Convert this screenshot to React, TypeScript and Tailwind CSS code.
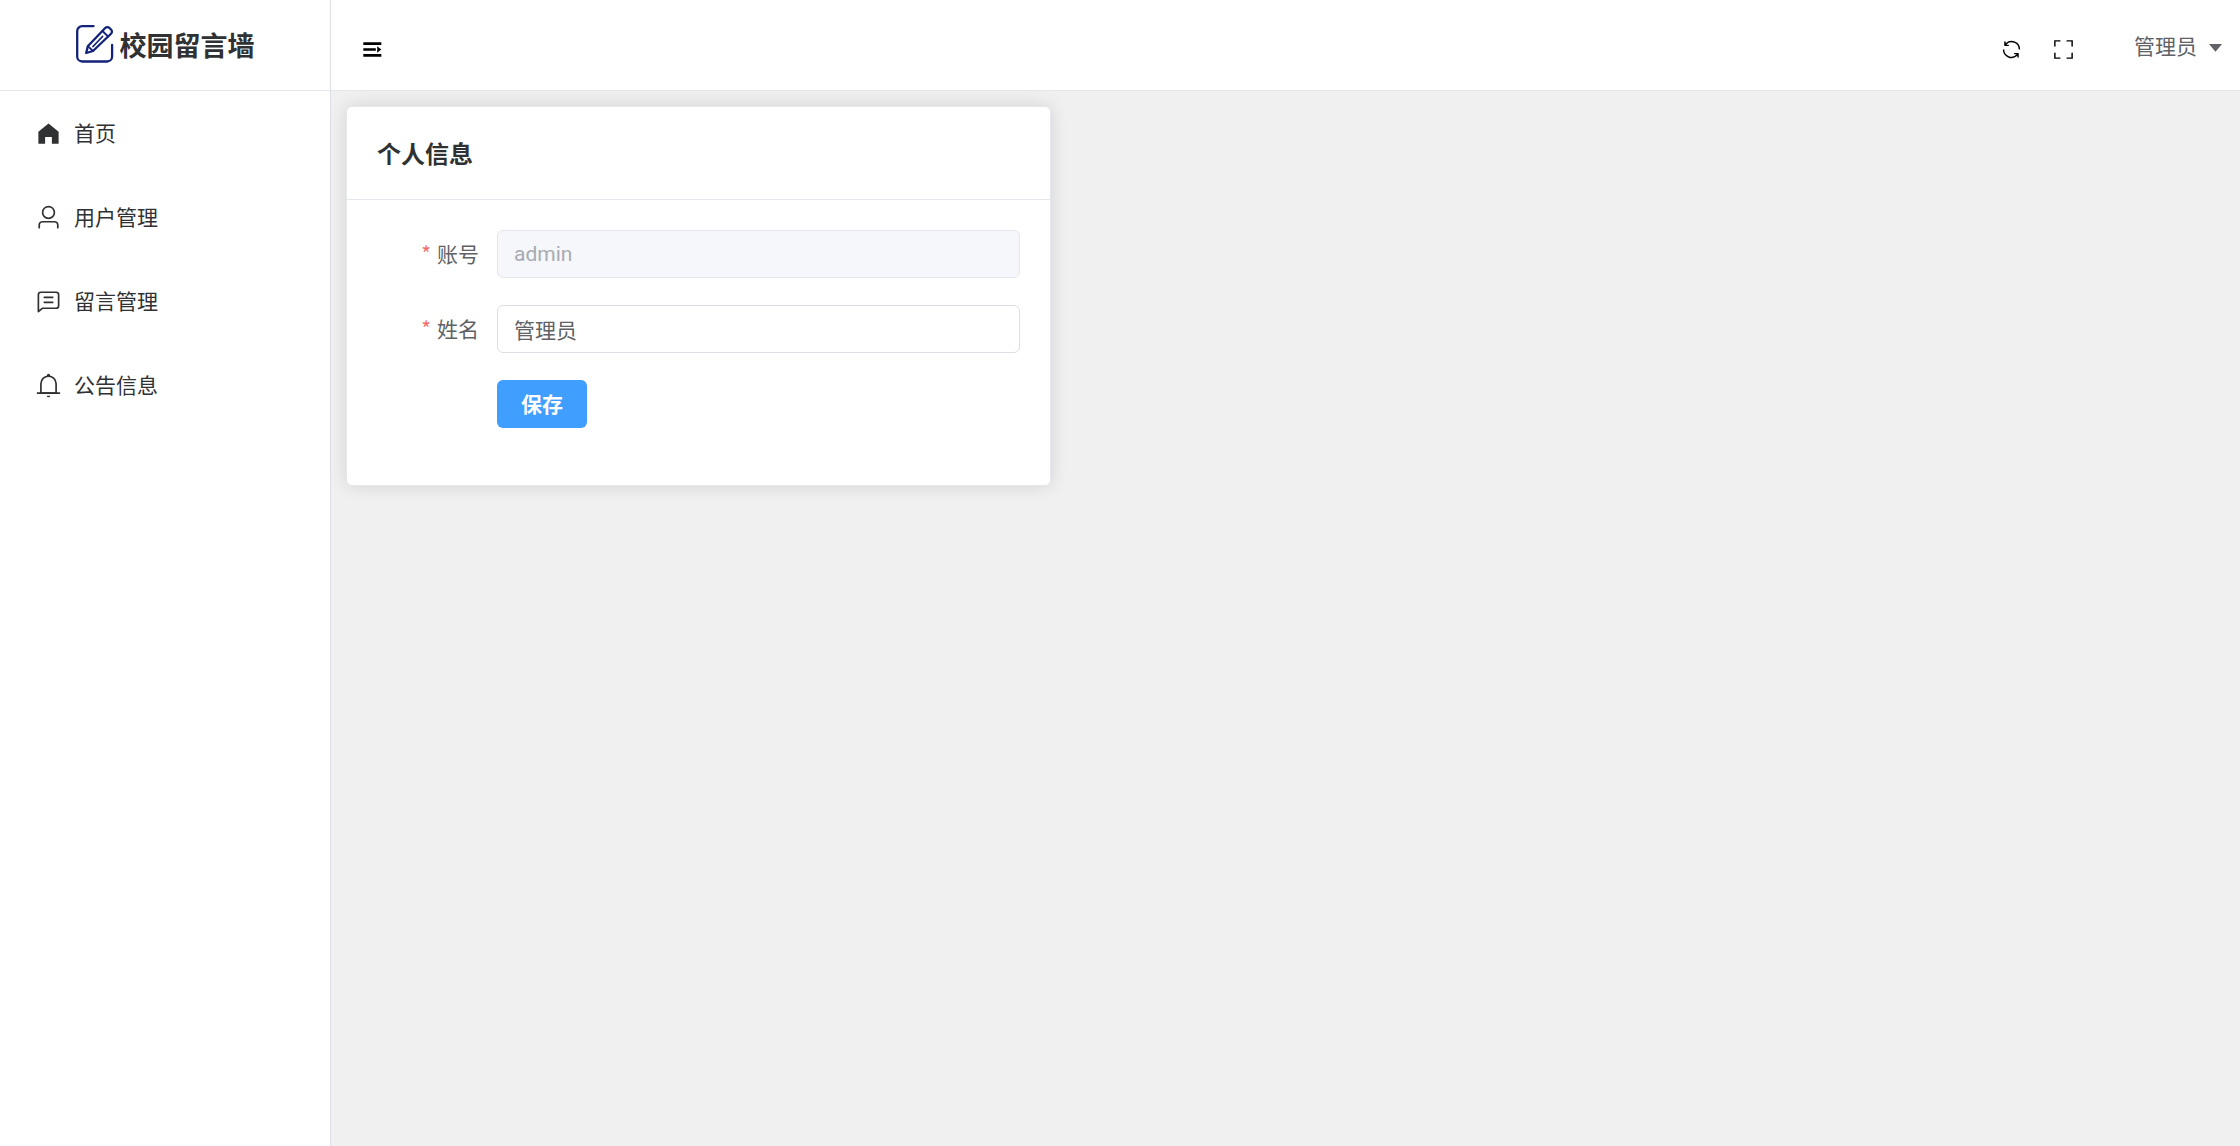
import React, { useState } from 'react';

type IconProps = {
  paths: string[];
  className?: string;
};

const icons = {
  home: ['M512 128 128 447.936V896h255.936V640H640v256h255.936V447.936z'],
  user: [
    'M512 512a192 192 0 1 0 0-384 192 192 0 0 0 0 384m0 64a256 256 0 1 1 0-512 256 256 0 0 1 0 512m320 320v-96a96 96 0 0 0-96-96H288a96 96 0 0 0-96 96v96a32 32 0 1 1-64 0v-96a160 160 0 0 1 160-160h448a160 160 0 0 1 160 160v96a32 32 0 1 1-64 0',
  ],
  chat: [
    'M160 826.88 273.536 736H800a64 64 0 0 0 64-64V256a64 64 0 0 0-64-64H224a64 64 0 0 0-64 64zM296 800 147.968 918.4A32 32 0 0 1 96 893.44V256a128 128 0 0 1 128-128h576a128 128 0 0 1 128 128v416a128 128 0 0 1-128 128z',
    'M352 512h320q32 0 32 32t-32 32H352q-32 0-32-32t32-32m0-192h320q32 0 32 32t-32 32H352q-32 0-32-32t32-32',
  ],
  bell: [
    'M512 64a64 64 0 0 1 64 64v64H448v-64a64 64 0 0 1 64-64',
    'M256 768h512V448a256 256 0 1 0-512 0zm256-640a320 320 0 0 1 320 320v384H192V448a320 320 0 0 1 320-320',
    'M96 768h832q32 0 32 32t-32 32H96q-32 0-32-32t32-32m352 128h128a64 64 0 0 1-128 0',
  ],
  refresh: [
    'M771.776 794.88A384 384 0 0 1 128 512h64a320 320 0 0 0 555.712 216.448H654.72a32 32 0 1 1 0-64h149.056a32 32 0 0 1 32 32v148.928a32 32 0 1 1-64 0v-50.56zM276.288 295.616h92.992a32 32 0 0 1 0 64H220.16a32 32 0 0 1-32-32V178.56a32 32 0 0 1 64 0v50.56A384 384 0 0 1 896.128 512h-64a320 320 0 0 0-555.776-216.384z',
  ],
  fullScreen: [
    'm160 96.064 192 .192a32 32 0 0 1 0 64l-192-.192V352a32 32 0 0 1-64 0V96h64zm0 831.872V928H96V672a32 32 0 1 1 64 0v191.936l192-.192a32 32 0 1 1 0 64zM864 96.064V96h64v256a32 32 0 1 1-64 0V160.064l-192 .192a32 32 0 1 1 0-64zm0 831.872-192-.192a32 32 0 0 1 0-64l192 .192V672a32 32 0 1 1 64 0v256h-64z',
  ],
  caret: ['m192 384 320 384 320-384z'],
  fold: ['M64 160h880v128H64zM64 448h610v128H64zM64 736h880v128H64zM740 350l200 162-200 162z'],
};

const menu = [
  { label: '首页', icon: icons.home },
  { label: '用户管理', icon: icons.user },
  { label: '留言管理', icon: icons.chat },
  { label: '公告信息', icon: icons.bell },
];

function Icon({ paths, className = '' }: IconProps) {
  return (
    <svg viewBox="0 0 1024 1024" fill="currentColor" aria-hidden="true" className={`shrink-0 ${className}`}>
      {paths.map((d) => (
        <path key={d} d={d} />
      ))}
    </svg>
  );
}

function Logo() {
  return (
    <svg
      viewBox="0 0 40 40"
      fill="none"
      stroke="#13227a"
      strokeWidth="2.3"
      strokeLinecap="round"
      strokeLinejoin="round"
      aria-hidden="true"
      className="h-10 w-10 shrink-0"
    >
      <path d="M17.5 1.2H6.2a5 5 0 0 0-5 5v25.3a5 5 0 0 0 5 5h24.9a5 5 0 0 0 5-5V20" />
      <path d="M10.2 28l1.6-6.8L29.2 3a3 3 0 0 1 4.3 0l1.5 1.5a3 3 0 0 1 0 4.3L17 26z" />
      <path d="M26.5 6l5.5 5.5M11.8 21.2L17 26M26.5 11.5l-9.5 10" strokeWidth="1.8" />
    </svg>
  );
}

function Sidebar() {
  return (
    <aside className="flex w-[331px] shrink-0 flex-col border-r border-[#dcdfe6] bg-white">
      <div className="flex h-[91px] items-center justify-center gap-1 border-b border-[#e4e7ed]">
        <Logo />
        <h1 className="text-[27px] font-bold">校园留言墙</h1>
      </div>
      <nav>
        {menu.map(({ label, icon }) => (
          <a key={label} href="#" className="flex h-[84px] items-center gap-3 px-[35px] text-[21px]">
            <Icon paths={icon} className="h-[27px] w-[27px]" />
            {label}
          </a>
        ))}
      </nav>
    </aside>
  );
}

function Header() {
  return (
    <header className="flex h-[91px] shrink-0 items-center border-b border-[#e4e7ed] bg-white pr-[14px] pl-[31px] text-black">
      <button type="button" aria-label="折叠菜单" className="pt-2">
        <Icon paths={icons.fold} className="h-[21px] w-[21px]" />
      </button>
      <div className="ml-auto flex items-center">
        <button type="button" aria-label="刷新" className="mr-[29px] pt-2">
          <Icon paths={icons.refresh} className="h-[23px] w-[23px]" />
        </button>
        <button type="button" aria-label="全屏" className="mr-[59px] pt-2">
          <Icon paths={icons.fullScreen} className="h-[23px] w-[23px]" />
        </button>
        <button type="button" className="flex items-center gap-2 pt-[2px] text-[21px] text-[#606266]">
          管理员
          <Icon paths={icons.caret} className="h-[21px] w-[21px]" />
        </button>
      </div>
    </header>
  );
}

type FieldProps = {
  id: string;
  label: string;
  value: string;
  disabled?: boolean;
  onChange?: (value: string) => void;
};

function Field({ id, label, value, disabled, onChange }: FieldProps) {
  return (
    <div className="mb-[27px] flex">
      <label htmlFor={id} className="flex h-12 w-[120px] shrink-0 items-center justify-end pr-[18px]">
        <span className="mr-[6px] text-[#f56c6c]">*</span>
        {label}
      </label>
      <input
        id={id}
        type="text"
        value={value}
        disabled={disabled}
        required
        onChange={(e) => onChange?.(e.target.value)}
        className="h-12 min-w-0 flex-1 rounded-md border border-[#dcdfe6] bg-white px-4 font-['Roboto','Noto_Sans_CJK_SC',sans-serif] outline-none disabled:border-[#e4e7ed] disabled:bg-[#f5f7fa] disabled:text-[#a8abb2]"
      />
    </div>
  );
}

function ProfileCard() {
  const [name, setName] = useState('管理员');

  return (
    <section className="w-[37.5%] rounded-md border border-[#e4e7ed] bg-white shadow-[0_0_18px_rgba(0,0,0,0.12)]">
      <div className="border-b border-[#e4e7ed] px-[30px] py-[27px] text-2xl leading-[38px] font-bold text-[#303133]">
        个人信息
      </div>
      <form className="p-[30px] text-[21px] text-[#606266]" onSubmit={(e) => e.preventDefault()}>
        <Field id="account" label="账号" value="admin" disabled />
        <Field id="name" label="姓名" value={name} onChange={setName} />
        <div className="mb-[27px] pl-[120px]">
          <button type="submit" className="h-12 rounded-md bg-[#409eff] px-6 font-bold text-white">
            保存
          </button>
        </div>
      </form>
    </section>
  );
}

export default function App() {
  return (
    <div className="flex min-h-screen bg-[#f0f0f0] font-['Noto_Sans_CJK_SC',sans-serif] text-[#303133]">
      <Sidebar />
      <div className="flex min-w-0 flex-1 flex-col">
        <Header />
        <main className="p-[15px]">
          <ProfileCard />
        </main>
      </div>
    </div>
  );
}
